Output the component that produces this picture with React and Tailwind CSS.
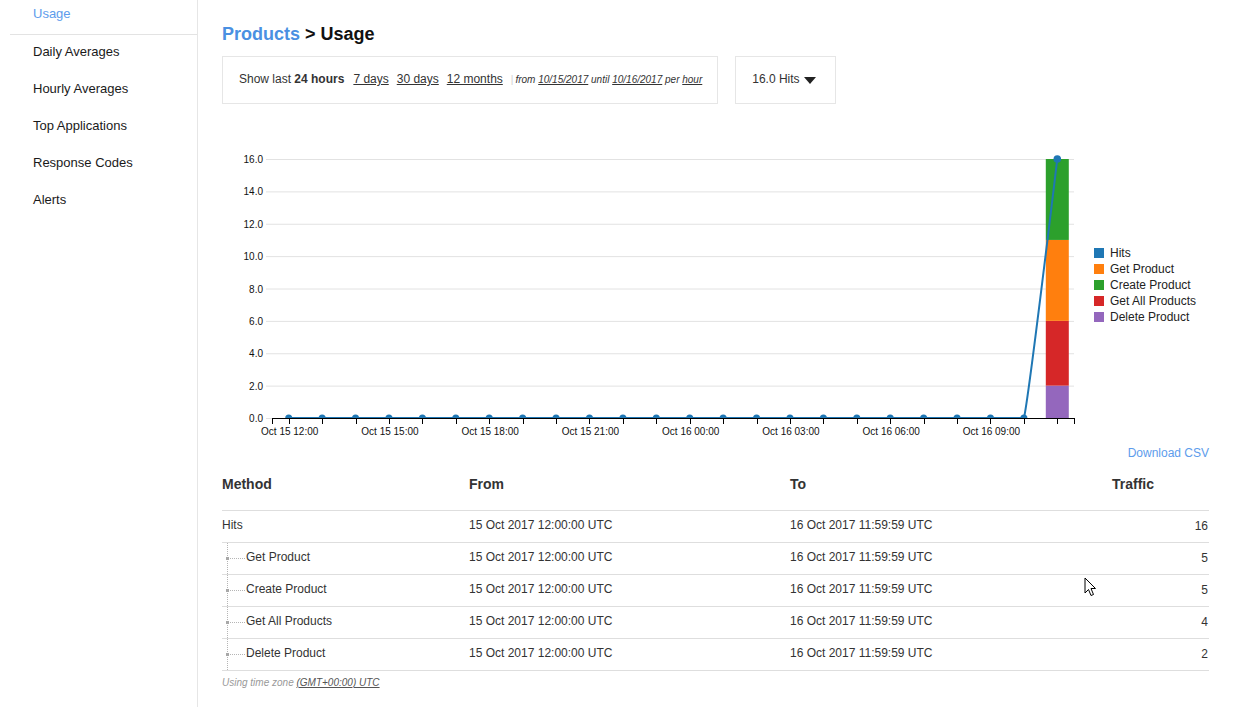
import React from "react";

const BLUE = "#1f77b4";

function Chart() {
  const band = 802 / 24;
  const xs = Array.from({ length: 24 }, (_, i) => 272 + band * (i + 0.5));
  const yOf = (v) => 418 - (v * 259) / 16;
  const grid = [0, 2, 4, 6, 8, 10, 12, 14, 16];
  const labels = [
    "Oct 15 12:00",
    "Oct 15 15:00",
    "Oct 15 18:00",
    "Oct 15 21:00",
    "Oct 16 00:00",
    "Oct 16 03:00",
    "Oct 16 06:00",
    "Oct 16 09:00",
  ];
  const last = xs[23];
  const prev = xs[22];
  const linePath =
    `M${xs[0]},418 L${prev},418 ` +
    `C${prev + 4},405 ${last - 5},200 ${last},159`;
  const stack = [
    { v: 2, c: "#9467bd" },
    { v: 4, c: "#d62728" },
    { v: 5, c: "#ff7f0e" },
    { v: 5, c: "#2ca02c" },
  ];
  let acc = 0;
  const legend = [
    ["Hits", "#1f77b4"],
    ["Get Product", "#ff7f0e"],
    ["Create Product", "#2ca02c"],
    ["Get All Products", "#d62728"],
    ["Delete Product", "#9467bd"],
  ];
  return (
    <svg
      width="987"
      height="341"
      viewBox="222 104 987 341"
      className="block"
      style={{ fontFamily: "'Liberation Sans', Arial, sans-serif" }}
    >
      <defs>
        <clipPath id="above">
          <rect x="222" y="104" width="987" height="314" />
        </clipPath>
      </defs>
      {grid.map((v) => (
        <g key={v}>
          <line x1="266" x2="1074" y1={yOf(v) + 0.5} y2={yOf(v) + 0.5} stroke="#e2e2e2" strokeWidth="1" />
          <text x="263" y={yOf(v) + 4} fontSize="10" textAnchor="end" fill="#111">
            {v.toFixed(1)}
          </text>
        </g>
      ))}
      {stack.map((s, i) => {
        const y1 = yOf(acc);
        acc += s.v;
        const y2 = yOf(acc);
        return <rect key={i} x={last - 11.5} y={y2} width="23" height={y1 - y2} fill={s.c} />;
      })}
      <g clipPath="url(#above)">
        <path d={linePath} fill="none" stroke={BLUE} strokeWidth="2" />
        {xs.slice(0, 23).map((x, i) => (
          <circle key={i} cx={x} cy="418" r="3.5" fill={BLUE} />
        ))}
      </g>
      <circle cx={last} cy="159" r="3.8" fill={BLUE} />
      <line x1="272" x2="1074" y1="418.5" y2="418.5" stroke="#000" strokeWidth="1" />
      {[272, ...xs, 1074].map((x, i) => (
        <line key={i} x1={Math.round(x) + 0.5} x2={Math.round(x) + 0.5} y1="418" y2="424" stroke="#000" strokeWidth="1" />
      ))}
      {labels.map((l, i) => (
        <text key={l} x={xs[i * 3] + 1} y="435" fontSize="10" textAnchor="middle" fill="#111">
          {l}
        </text>
      ))}
      {legend.map(([name, c], i) => (
        <g key={name}>
          <rect x="1094" y={248 + i * 16} width="10" height="10" fill={c} />
          <text x="1110" y={257 + i * 16} fontSize="12" fill="#222">
            {name}
          </text>
        </g>
      ))}
    </svg>
  );
}

function TreeMark() {
  return (
    <svg width="24" height="31" className="shrink-0 block">
      <line x1="5.5" x2="5.5" y1="0" y2="31" stroke="#b5b5b5" strokeWidth="1" strokeDasharray="1 1" />
      <rect x="4" y="14" width="3" height="3" fill="#a8a8a8" />
      <line x1="8" x2="23" y1="15.5" y2="15.5" stroke="#b5b5b5" strokeWidth="1" strokeDasharray="1 1" />
    </svg>
  );
}

const rows = [
  { name: "Hits", traffic: 16, child: false },
  { name: "Get Product", traffic: 5, child: true },
  { name: "Create Product", traffic: 5, child: true },
  { name: "Get All Products", traffic: 4, child: true },
  { name: "Delete Product", traffic: 2, child: true },
];

export default function App() {
  const side = ["Daily Averages", "Hourly Averages", "Top Applications", "Response Codes", "Alerts"];
  return (
    <div className="relative flex min-h-[707px] bg-white font-['Liberation_Sans',Arial,sans-serif] text-[#333] overflow-hidden">
      <aside className="w-[198px] shrink-0 border-r border-[#e6e6e6]">
        <div className="-mt-[4px]">
          <div className="h-[38px] pt-[10px] pl-[33px] text-[13px] leading-[15px] text-[#5d9cec]">Usage</div>
          <div className="ml-[10px] border-t border-[#e3e3e3]">
            {side.map((s) => (
              <div key={s} className="h-[37px] pt-[9px] pl-[23px] text-[13px] leading-[15px] text-[#1a1a1a]">
                {s}
              </div>
            ))}
          </div>
        </div>
      </aside>
      <main className="flex-1 pl-[24px] pr-[27px] pt-[24px]">
        <h1 className="text-[18px] leading-[20px] font-bold text-[#111]">
          <span className="text-[#4a90e2]">Products</span> &gt; Usage
        </h1>
        <div className="mt-[12px] flex gap-[17px]">
          <div className="h-[48px] border border-[#e6e6e6] pl-[16px] pr-[15px] pt-[14px] text-[12px] leading-[17px] whitespace-nowrap">
            Show last <b className="font-bold">24 hours</b>
            <span className="ml-[9px] underline">7 days</span>
            <span className="ml-[8px] underline">30 days</span>
            <span className="ml-[8px] underline">12 months</span>
            <span className="ml-[8px] mr-[2px] text-[10px] text-[#d0d0d0]">|</span>
            <span className="text-[10px] italic">
              from <span className="underline">10/15/2017</span> until{" "}
              <span className="underline">10/16/2017</span> per <span className="underline">hour</span>
            </span>
          </div>
          <div className="h-[48px] w-[101px] border border-[#e6e6e6] pl-[16px] pt-[14px] text-[12px] leading-[17px] whitespace-nowrap flex items-start">
            <span>16.0 Hits</span>
            <svg width="12" height="7" className="ml-[4px] mt-[6px]">
              <polygon points="0,0 12,0 6,7" fill="#222" />
            </svg>
          </div>
        </div>
        <Chart />
        <div className="text-right text-[12px] leading-[17px] text-[#5d9cec]">Download CSV</div>
        <div className="grid grid-cols-[247px_321px_322px_1fr] h-[49px] border-b border-[#dedede] pt-[12px] text-[14px] leading-[20px] font-bold text-[#333]">
          <div>Method</div>
          <div>From</div>
          <div>To</div>
          <div>Traffic</div>
        </div>
        {rows.map((r) => (
          <div
            key={r.name}
            className="grid grid-cols-[247px_321px_322px_1fr] h-[32px] border-b border-[#dedede] text-[12px] text-[#333]"
          >
            <div className="flex items-center">
              {r.child && <TreeMark />}
              <span className="pb-[4px]">{r.name}</span>
            </div>
            <div className="flex items-center">
              <span className="pb-[4px]">15 Oct 2017 12:00:00 UTC</span>
            </div>
            <div className="flex items-center">
              <span className="pb-[4px]">16 Oct 2017 11:59:59 UTC</span>
            </div>
            <div className="flex items-center justify-end pr-[1px]">
              <span className="pb-[2px]">{r.traffic}</span>
            </div>
          </div>
        ))}
        <div className="pt-[5px] text-[10px] leading-[14px] italic text-[#999]">
          Using time zone <span className="underline text-[#555]">(GMT+00:00) UTC</span>
        </div>
      </main>
      <svg
        width="13"
        height="20"
        viewBox="0 0 13 20"
        className="absolute left-[1084px] top-[577px] pointer-events-none"
      >
        <polygon points="1,1 1,16 4.5,12.5 7,18.5 9.5,17.5 7,11.5 11.5,11.5" fill="#fff" stroke="#000" strokeWidth="1" strokeLinejoin="round" />
      </svg>
    </div>
  );
}
